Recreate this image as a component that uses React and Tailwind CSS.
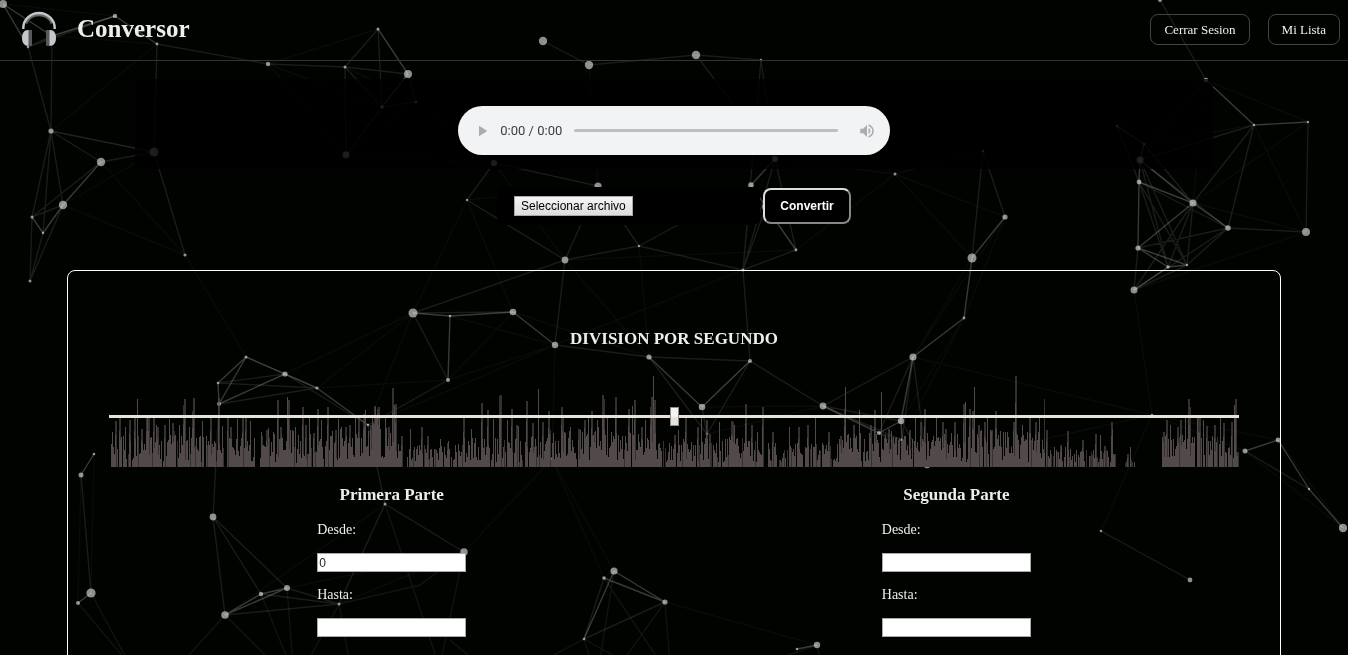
import React from "react";

/* Particle network: [x, y, radius] */
const NODES = {
  a1: [3, 4, 4], a2: [115, 16, 2.2], a3: [157, 44, 1.4], a4: [28, 47, 1.3], a5: [52, 36, 1.2],
  a6: [378, 29, 1.5], a7: [345, 67, 1.5], a8: [408, 74, 4], a9: [268, 64, 2.2], a10: [382, 107, 1.7],
  a11: [416, 102, 1.2], a12: [346, 155, 3.4], a13: [154, 152, 4.5], a14: [51, 131, 2.6], a15: [101, 162, 4.2],
  a16: [63, 205, 4.2], a17: [32, 217, 1.5], a18: [43, 233, 1.2], a19: [30, 281, 1.5], a20: [185, 255, 1.6],
  b1: [543, 41, 4.2], b2: [589, 65, 4.2], b3: [696, 55, 4.2], b4: [761, 60, 1.2], b5: [494, 163, 3],
  b6: [467, 200, 1.2], b7: [598, 186, 3.6], b8: [751, 185, 2.8], b9: [775, 159, 3], b10: [565, 260, 3.4],
  b11: [639, 246, 1.2], b12: [743, 270, 1.4], b13: [796, 250, 1.4], b14: [766, 207, 4], b15: [895, 174, 1.5],
  c1: [1160, 0, 2], c2: [1206, 80, 2.3], c3: [1254, 125, 1.2], c4: [1308, 122, 1.2], c5: [1117, 126, 1.2],
  c6: [1144, 144, 1.2], c7: [1140, 160, 3.5], c8: [1139, 182, 2.4], c9: [1193, 203, 3.6], c10: [1228, 228, 2.8],
  c11: [1306, 232, 4], c12: [1138, 248, 2.6], c13: [1168, 267, 1.7], c14: [1187, 265, 1.2], c15: [1134, 290, 3.5],
  c16: [983, 151, 1.2], c17: [1005, 217, 2.6], c18: [972, 258, 4.5],
  d1: [413, 313, 4.5], d2: [246, 357, 1.5], d3: [218, 383, 1.3], d4: [285, 374, 2.6], d5: [219, 404, 2],
  d6: [317, 388, 1.6], d7: [450, 316, 1.3], d8: [448, 380, 2], d9: [368, 425, 1.3], d10: [94, 454, 1.3],
  d11: [81, 475, 2.5], d12: [91, 593, 4.6], d13: [78, 603, 2], d14: [213, 517, 3.4], d15: [385, 504, 1.5],
  d16: [287, 588, 3], d17: [261, 594, 2.2], d18: [225, 615, 3.8], d19: [339, 604, 1.5], d20: [464, 552, 3.8],
  e1: [513, 312, 3.3], e2: [555, 345, 3.2], e3: [649, 357, 2.6], e4: [750, 361, 2], e5: [702, 407, 3.3],
  e6: [707, 434, 1.4], e7: [823, 406, 3.4], e8: [879, 433, 2], e9: [552, 459, 1.5], e10: [614, 571, 3.6],
  e11: [604, 578, 1.8], e12: [665, 602, 2.6], e13: [584, 639, 1.3], e14: [817, 645, 3.2], e15: [797, 649, 1.3],
  f1: [964, 318, 1.4], f2: [913, 357, 3.6], f3: [901, 421, 3.2], f4: [902, 440, 1.6], f5: [927, 465, 3.2],
  f6: [1152, 415, 1.2], f7: [1101, 531, 1.3], f8: [1190, 580, 2.4], f9: [1245, 451, 2.5], f10: [1278, 440, 2.4],
  f11: [1309, 489, 1.2], f12: [1343, 528, 4.2],
};

/* Edges grouped by strength */
const STRONG =
  "a1-a4 a1-a5 a5-a2 a2-a3 a6-a8 a8-a10 a15-a16 a17-a18 a16-a18 b13-b14 b8-b14 b9-b8 c2-c3 c3-c4 c7-c8 c8-c12 c8-c9 c7-c9 c9-c10 c13-c15 c13-c14 c9-c12 c12-c13 c12-c14 d1-d7 d7-e1 e1-e2 d7-d8 d2-d3 d2-d4 d2-d5 d3-d5 d4-d6 d5-d4 d6-d9 d10-d11 d17-d18 d16-d18 d16-d17 d12-d13 e10-e12 e10-e13 e11-e12 e3-e5 e4-e5 e7-e8 e8-f3 f3-f4 f2-f1 c18-f1 c17-c18 f9-f10 f11-f12 f10-f11 f2-f3 e14-e15 c6-c7 c5-c6";
const MEDIUM =
  "a4-a14 a5-a14 a6-a7 a7-a9 a7-a8 a6-a10 a7-a10 a7-a12 a10-a12 a10-a11 a8-a11 a4-a5 a4-a2 a9-a3 a3-a13 a14-a15 a14-a13 a13-a15 a14-a16 a14-a17 a14-a18 a15-a17 a16-a17 a16-a19 a18-a19 a17-a19 a13-a20 b1-b2 b2-b3 b3-b4 b3-b9 b4-b12 b4-b9 b5-b6 b5-b7 b6-b10 b7-b10 b10-b11 b11-b12 b12-b13 b12-b14 b8-b12 b9-b13 b9-b12 b7-b11 b8-b11 b10-d1 b12-e4 b10-e2 c1-c2 c16-c17 c16-c18 c3-c10 c3-c9 c3-c7 c4-c11 c10-c11 c5-c8 c6-c9 c7-c13 c7-c14 c8-c13 c8-c14 c8-c10 c9-c13 c9-c14 c9-c15 c10-c14 c10-c12 c14-c15 c12-c15 c10-c15 c7-c10 d1-d8 d1-e1 d3-d4 d3-d6 d5-d6 d8-d9 d4-d9 d9-d15 d14-d17 d14-d18 d14-d16 d15-d20 d15-d19 d16-d19 d17-d19 d18-d19 d5-d14 d11-d12 e2-e3 e3-e4 e3-e6 e5-e6 e4-e6 e4-e7 e7-f2 e7-f3 f2-e8 e8-f4 f3-f5 f4-f5 e8-f5 f2-f4 f2-f5 e11-e13 e12-e13 f7-f8 f9-f11 e7-f4";
const FAINT =
  "a1-a2 a2-a5 a3-a5 a9-a6 a9-a12 a9-a10 a7-a11 a11-a12 a12-b5 a11-b5 a13-a16 a15-a20 a16-a20 a3-a14 a13-a14 a20-d2 b2-b7 b5-b10 b6-b7 b6-e1 b6-d1 b9-b15 b13-b15 b10-b13 b10-e3 b11-e3 b12-e2 c2-c5 c2-c6 c2-c7 c2-c4 c2-c9 c3-c6 c3-c11 c4-c9 c9-c11 c11-c15 c15-f6 b15-c16 b15-c17 b15-c18 c17-f1 c17-f2 c18-f2 d1-d6 d1-d4 d1-d9 d2-d6 d7-e2 d8-e1 d8-d6 e2-d8 d10-d12 d11-d13 d15-d18 e1-e3 e2-e9 e9-e10 e9-d20 e9-e11 e5-e7 e6-e7 e5-e4 e12-e14 e10-e11 e2-d9 f2-f6 f5-f6 f6-f7 f1-f3 f6-f9 f6-f10 f9-f12 f10-f12 f1-f4 d16-d20 d19-d20";
const LOOSE =
  "M261 594L290 665M287 588L293 665M225 615L180 665M225 615L275 665M339 604L306 665M339 604L350 665M385 504L437 660M464 552L440 665M464 552L420 585L339 604M91 593L130 665M78 603L130 665M584 639L592 665M584 639L535 665M584 639L630 665M665 602L670 665M614 571L600 660M604 578L662 665M665 602L620 665M817 645L760 665M817 645L822 665M450 640L480 665";

function toPath(list) {
  return list
    .split(" ")
    .map((edge) => {
      const [p, q] = edge.split("-");
      return `M${NODES[p][0]} ${NODES[p][1]}L${NODES[q][0]} ${NODES[q][1]}`;
    })
    .join("");
}

function ParticleBackground() {
  return (
    <svg
      className="pointer-events-none fixed inset-0 h-full w-full"
      viewBox="0 0 1348 655"
      preserveAspectRatio="xMidYMid slice"
      aria-hidden="true"
    >
      <g fill="none" stroke="#e4eee2" strokeWidth="1.4">
        <path d={toPath(STRONG)} strokeOpacity="0.24" />
        <path d={toPath(MEDIUM)} strokeOpacity="0.11" />
        <path d={toPath(FAINT)} strokeOpacity="0.04" />
        <path d={LOOSE} strokeOpacity="0.07" />
      </g>
      <g fill="#ffffff" fillOpacity="0.55">
        {Object.entries(NODES).map(([id, [x, y, r]]) => (
          <circle key={id} cx={x} cy={y} r={r} />
        ))}
      </g>
    </svg>
  );
}

/* Tallest samples: [x, height] */
const PEAKS = [
  [3, 35], [6, 46], [10, 52], [16, 40], [20, 47], [25, 52], [28, 68], [32, 38], [37, 52], [38, 51], [39, 52], [44, 50], [47, 42], [48, 40],
  [55, 42], [60, 48], [63, 44], [64, 36], [70, 42], [74, 62], [75, 68], [80, 40], [84, 69], [83, 56], [93, 46], [101, 52], [109, 69], [113, 41],
  [118, 52], [121, 40], [128, 48], [133, 49], [136, 52], [141, 46], [152, 31], [157, 37], [164, 35], [168, 67], [171, 40], [178, 70],
  [179, 67], [183, 34], [186, 40], [193, 60], [196, 42], [200, 52], [204, 34], [208, 58], [212, 47], [218, 60], [226, 37], [229, 48],
  [236, 40], [240, 42], [246, 49], [249, 50], [254, 53], [256, 57], [261, 42], [265, 61], [266, 60], [268, 58], [269, 60], [276, 52], [279, 40],
  [283, 79], [285, 62], [286, 63], [292, 31], [301, 38], [313, 40], [319, 31], [332, 28], [339, 24], [355, 50], [363, 38],
  [373, 64], [379, 57], [385, 48], [391, 71], [392, 72], [399, 47], [403, 58], [408, 42], [410, 41], [418, 66], [424, 44], [430, 78],
  [434, 45], [440, 56], [445, 34], [453, 60], [454, 52], [462, 40], [470, 38], [476, 47], [480, 52], [483, 56], [486, 35], [489, 47],
  [494, 72], [495, 68], [499, 49], [507, 70], [520, 58], [524, 61], [526, 67], [533, 40], [537, 47], [543, 70], [542, 60], [545, 91], [546, 67],
  [566, 32], [570, 37], [577, 50], [589, 40], [593, 52], [598, 47], [601, 33], [611, 45], [623, 46], [624, 45], [626, 42], [637, 63],
  [643, 42], [649, 35], [654, 60], [664, 35], [681, 40], [690, 40], [699, 42], [707, 49], [720, 35], [732, 31], [737, 80], [736, 58],
  [745, 42], [751, 57], [762, 42], [766, 57], [773, 75], [780, 38], [801, 37], [807, 49], [812, 45], [816, 58], [828, 49], [834, 45],
  [837, 38], [843, 34], [846, 45], [855, 63], [857, 65], [861, 58], [864, 56], [866, 80], [870, 42], [876, 45], [879, 49], [883, 37], [887, 56],
  [897, 35], [905, 45], [907, 91], [914, 42], [921, 49], [927, 45], [931, 49], [936, 68], [939, 37], [947, 20], [953, 22], [960, 36],
  [969, 17], [975, 27], [988, 33], [993, 32], [997, 21], [1004, 45], [1005, 38], [1007, 13], [1020, 13], [1023, 20], [1056, 35],
  [1059, 47], [1063, 42], [1070, 40], [1073, 47], [1078, 49], [1081, 68], [1082, 60], [1090, 51], [1091, 50], [1092, 49], [1096, 47], [1099, 41],
  [1107, 42], [1113, 49], [1116, 44], [1124, 45], [1127, 62], [1128, 68], [1130, 15],
];

/* Body of the signal: [from, to, max height, density] */
const SEGMENTS = [
  [2, 146, 28, 0.74], [151, 180, 36, 0.9], [180, 226, 34, 0.78], [226, 262, 38, 0.96], [262, 274, 52, 1], [274, 292, 36, 0.95],
  [298, 336, 18, 0.75], [336, 385, 26, 0.85], [385, 440, 26, 0.72], [440, 475, 34, 0.85], [475, 504, 44, 1], [504, 548, 32, 0.9],
  [548, 575, 22, 0.72], [575, 655, 26, 0.85], [660, 730, 20, 0.72], [730, 800, 32, 0.88], [800, 862, 30, 0.95],
  [862, 900, 34, 0.86], [900, 935, 32, 0.98], [935, 965, 16, 0.6], [965, 1008, 14, 0.42], [1018, 1028, 3, 0.3],
  [1055, 1130, 28, 0.84],
];

function buildWave() {
  let seed = 9173;
  const next = () => {
    seed = (seed * 16807) % 2147483647;
    return seed / 2147483647;
  };
  let solid = "";
  let soft = "";
  SEGMENTS.forEach(([from, to, max, density]) => {
    for (let x = from; x < to; x += 1) {
      const keep = next() < density;
      const h = Math.round(4 + max * Math.pow(next(), 0.8));
      const bar = `M${x} 100v-${h}h1v${h}z`;
      if (keep) solid += bar;
      else if (next() < 0.5) soft += bar;
    }
  });
  PEAKS.forEach(([x, h], i) => {
    const bar = `M${x} 100v-${h}h1v${h}z`;
    if (i % 3 === 0) {
      solid += bar;
    } else {
      const core = Math.round(h * 0.7);
      solid += `M${x} 100v-${core}h1v${core}z`;
      soft += bar + `M${x + 1} 100v-${h}h1v${h}z`;
    }
  });
  return { solid, soft };
}

const WAVE = buildWave();

function Waveform() {
  return (
    <svg
      className="col-start-1 row-start-1 h-[100px] w-full self-start"
      viewBox="0 0 1131 100"
      preserveAspectRatio="none"
      shapeRendering="crispEdges"
      aria-hidden="true"
    >
      <path d={WAVE.soft} fill="#524a4a" fillOpacity="0.65" />
      <path d={WAVE.solid} fill="#524a4a" />
    </svg>
  );
}

function HeadphonesLogo() {
  return (
    <svg className="h-9 w-9" viewBox="0 0 36 36" aria-hidden="true">
      <path d="M5.200 12.500A13.600 12.800 0 0 1 30.800 12.500" fill="none" stroke="#68686b" strokeWidth="2.400" />
      <path d="M2.300 18V17A15.700 15 0 0 1 33.700 17V18" fill="none" stroke="#c6c7ca" strokeWidth="2.400" />
      <path d="M8 19H7C3 19 1 22.500 1 27S3 34.800 7 34.800H8z" fill="#c6c7ca" />
      <path d="M7.500 19H11V34.800H7.500z" fill="#58585b" />
      <path d="M28 19H29C33 19 35 22.500 35 27S33 34.800 29 34.800H28z" fill="#c6c7ca" />
      <path d="M25 19H28.500V34.800H25z" fill="#58585b" />
    </svg>
  );
}

function AudioPlayer() {
  return (
    <div
      role="group"
      aria-label="Reproductor de audio"
      className="flex h-[49px] w-2/5 items-center rounded-full bg-[#f1f3f4] pr-3.5 pl-3.5"
    >
      <button type="button" disabled aria-label="Reproducir" className="flex h-5 w-5 items-center justify-center">
        <svg className="h-[18px] w-[18px]" viewBox="0 0 24 24" fill="#a9abac" aria-hidden="true">
          <path d="M8 5v14l11-7z" />
        </svg>
      </button>
      <span className="ml-2 w-[74px] font-[Roboto,'Liberation_Sans',sans-serif] text-[13px] leading-5 text-[#3c4043]">
        0:00 / 0:00
      </span>
      <input
        type="range"
        min="0"
        max="100"
        defaultValue="0"
        disabled
        aria-label="Posicion"
        className="m-0 h-4 min-w-0 flex-1 appearance-none bg-transparent [&::-webkit-slider-runnable-track]:h-[3px] [&::-webkit-slider-runnable-track]:rounded-full [&::-webkit-slider-runnable-track]:bg-[#bdbfc0] [&::-webkit-slider-thumb]:h-[3px] [&::-webkit-slider-thumb]:w-px [&::-webkit-slider-thumb]:appearance-none"
      />
      <button type="button" disabled aria-label="Silenciar" className="ml-5 flex h-5 w-[18px] items-center justify-center">
        <svg className="h-[18px] w-[18px]" viewBox="0 0 24 24" fill="#a9abac" aria-hidden="true">
          <path d="M3 9v6h4l5 5V4L7 9H3zm13.500 3c0-1.770-1.020-3.290-2.500-4.030v8.050c1.480-.73 2.500-2.250 2.500-4.020zM14 3.230v2.060c2.890.86 5 3.540 5 6.710s-2.110 5.850-5 6.710v2.060c4.010-.91 7-4.490 7-8.770s-2.990-7.860-7-8.770z" />
        </svg>
      </button>
    </div>
  );
}

function Field({ id, label, value }) {
  return (
    <div className="flex flex-col gap-[15px]">
      <label htmlFor={id} className="text-[14px] leading-4">
        {label}
      </label>
      <input
        id={id}
        type="text"
        defaultValue={value}
        className="h-[19px] w-[149px] border border-[#a9a9a9] bg-white px-px font-['Liberation_Sans',Arial,sans-serif] text-[12px] text-[#222] outline-none"
      />
    </div>
  );
}

function Part({ name, title, from }) {
  return (
    <section className="flex flex-col items-center gap-[17px]">
      <h3 className="text-[17px] leading-5 font-bold">{title}</h3>
      <div className="flex flex-col gap-[15px]">
        <Field id={`${name}-desde`} label="Desde:" value={from} />
        <Field id={`${name}-hasta`} label="Hasta:" value="" />
      </div>
    </section>
  );
}

export default function App() {
  return (
    <div className="min-h-screen overflow-x-hidden bg-[#000300] font-['Liberation_Serif','Times_New_Roman',serif] text-[#eeeeee]">
      <ParticleBackground />
      <div className="relative">
        <header className="flex h-[61px] items-center justify-between border-b border-[#333333] pr-2 pb-0.5 pl-[21px]">
          <div className="flex items-center gap-5">
            <HeadphonesLogo />
            <h1 className="text-[25px] leading-8 font-bold">Conversor</h1>
          </div>
          <nav className="flex gap-[18px] text-[13px] leading-[15px]">
            <a href="#salir" className="rounded-lg border border-[#444444] px-[13px] py-[7px]">
              Cerrar Sesion
            </a>
            <a href="#lista" className="rounded-lg border border-[#444444] px-[13px] py-[7px]">
              Mi Lista
            </a>
          </nav>
        </header>

        <main className="flex flex-col items-center pb-10">
          <div className="mt-[18px] flex h-[90px] w-4/5 justify-center bg-black/80 pt-[27px]">
            <AudioPlayer />
          </div>

          <form className="mt-[18px] flex items-center gap-[3px] font-['Liberation_Sans',Arial,sans-serif] text-[12px]">
            <div className="flex h-[38px] w-[263px] items-center rounded-lg bg-black px-[17px]">
              <label className="flex h-5 cursor-pointer items-center border border-[#a9a9a9] bg-linear-to-b from-[#f6f6f6] to-[#dddddd] px-1.5 text-black">
                Seleccionar archivo
                <input type="file" className="sr-only" />
              </label>
            </div>
            <button
              type="button"
              className="h-9 w-[88px] rounded-lg border-2 border-t-[#dddddd] border-r-[#888888] border-b-[#888888] border-l-[#dddddd] bg-black font-bold text-white"
            >
              Convertir
            </button>
          </form>

          <section className="mt-[45px] w-[90%] rounded-lg border border-white px-[41px] pt-[58px] pb-16">
            <h2 className="text-center text-[17px] leading-5 font-bold">DIVISION POR SEGUNDO</h2>
            <div className="mt-[18px] grid h-[98px] grid-rows-[98px] items-center">
              <Waveform />
              <input
                type="range"
                min="0"
                max="100"
                defaultValue="50"
                aria-label="Segundo de division"
                className="relative col-start-1 row-start-1 m-0 h-5 w-full appearance-none bg-transparent outline-none [&::-webkit-slider-runnable-track]:h-[3px] [&::-webkit-slider-runnable-track]:bg-[#e6e4da] [&::-webkit-slider-thumb]:-mt-2 [&::-webkit-slider-thumb]:h-[19px] [&::-webkit-slider-thumb]:w-[9px] [&::-webkit-slider-thumb]:appearance-none [&::-webkit-slider-thumb]:border [&::-webkit-slider-thumb]:border-[#938b85] [&::-webkit-slider-thumb]:bg-linear-to-b [&::-webkit-slider-thumb]:from-[#f6f4f2] [&::-webkit-slider-thumb]:from-50% [&::-webkit-slider-thumb]:to-[#e6e2dd] [&::-webkit-slider-thumb]:to-50%"
              />
            </div>
            <div className="mt-5 grid grid-cols-2">
              <Part name="primera" title="Primera Parte" from="0" />
              <Part name="segunda" title="Segunda Parte" from="" />
            </div>
          </section>
        </main>
      </div>
    </div>
  );
}
